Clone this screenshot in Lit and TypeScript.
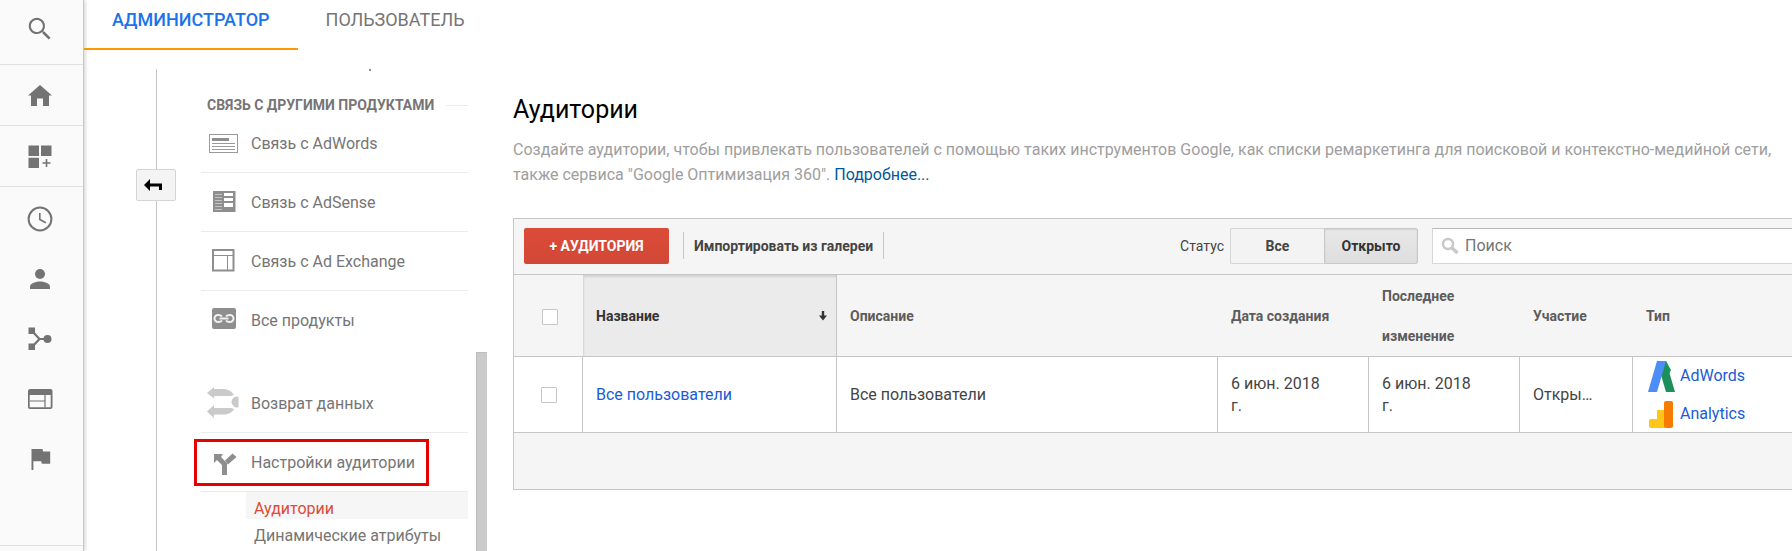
import { LitElement, html, css, svg } from "lit";
import { customElement, state } from "lit/decorators.js";
import { classMap } from "lit/directives/class-map.js";

const railIcons = {
  search: svg`<g transform="scale(1.25)"><path d="M15.5 14h-.79l-.28-.27C15.41 12.59 16 11.11 16 9.5 16 5.91 13.09 3 9.5 3S3 5.91 3 9.5 5.91 16 9.5 16c1.61 0 3.09-.59 4.23-1.57l.27.28v.79l5 4.99L20.49 19l-4.99-5zm-6 0.3C6.85 14.3 4.7 12.15 4.7 9.5S6.85 4.7 9.5 4.7 14.3 6.85 14.3 9.5 12.15 14.3 9.5 14.3z"/></g>`,
  home: svg`<path d="M6 25V14.500H3L15 4l12 10.500h-3V25h-6v-7.500h-6V25z"/>`,
  dashboard: svg`<path d="M3.500 3.500H14V14H3.500zM16 3.500h10.500V14H16zM3.500 15.700H14V26H3.500z"/><path d="M17.500 21h8M21.500 17v8" fill="none" stroke="currentColor" stroke-width="1.600"/>`,
  clock: svg`<g fill="none" stroke="currentColor"><circle cx="15" cy="15" r="11.400" stroke-width="2"/><path d="M14.800 9v6.500l6 3.300" stroke-width="1.600"/></g>`,
  person: svg`<circle cx="15" cy="10" r="5"/><path d="M5 25v-2.500c0-3.400 6.600-5 10-5s10 1.600 10 5V25z"/>`,
  flow: svg`<path d="M3.500 3.500H10V10H3.500zM3.500 19.500H10V26H3.500z"/><circle cx="22.500" cy="15" r="4"/><path d="M7 7l7.500 8L7 23M14.500 15h6" fill="none" stroke="currentColor" stroke-width="2.200"/>`,
  web: svg`<path fill-rule="evenodd" d="M5 5h20.500a2 2 0 0 1 2 2v16a2 2 0 0 1-2 2H5a2 2 0 0 1-2-2V7a2 2 0 0 1 2-2zM4.700 11v12.300h21V11z"/><path d="M20 11v12.500M4.700 17H20" fill="none" stroke="currentColor" stroke-width="1.200"/>`,
  flag: svg`<path d="M18 7.500L17.500 5H6.500v21h1.900v-8.800h7.800l.6 2.600h8.400V7.500z"/>`,
};

const navIcons = {
  adwords: svg`<rect x="3.500" y="7.500" width="28" height="18" fill="#fff" stroke="#9a9a9a"/><rect x="6" y="11" width="17" height="3" fill="#8e8e8e"/><path d="M6 16.500h23M6 19.500h23M6 22.500h23" stroke="#9a9a9a"/>`,
  adsense: svg`<rect x="7" y="5" width="22.500" height="21" fill="#8e8e8e"/><path d="M9 8.500h7M9 11.500h7M9 14.500h7M9 17.500h7M9 20.500h7M9 23.500h7" stroke="#c4c4c4"/><path d="M18 7h9v3h-9zM18 12h9v3h-9zM18 17h9v4h-9z" fill="#fff"/>`,
  exchange: svg`<rect x="7" y="5" width="20.500" height="20.500" fill="#fff" stroke="#8e8e8e" stroke-width="2"/><path d="M8 10.500h19M21.500 10.500V25" stroke="#8e8e8e"/>`,
  products: svg`<rect x="6" y="4" width="24" height="21" rx="2" fill="#8e8e8e"/><g fill="none" stroke="#f0f0f0" stroke-width="2"><path d="M16 12.500c-1-1.500-2-1.500-4-1.500a3.500 3.500 0 0 0 0 7c2 0 3 0 4-1.500M20 12.500c1-1.500 2-1.500 4-1.500a3.500 3.500 0 0 1 0 7c-2 0-3 0-4-1.500"/><path d="M13.500 14.500h9"/></g>`,
  refund: svg`<g fill="#cacaca"><path d="M1 6l7-6v2h9c5 0 9 2.500 11 6l-3 1H8v2.500zM1 24.500l7-6.500v3h17l3 1c-2 4-6 5.500-11 5.500H8V31z"/><path d="M32.500 9.700a5.500 5.500 0 1 0 0 10.600z"/></g>`,
  audience: svg`<g fill="#8e8e8e"><path d="M8 8h9l-2 3 6 6v12h-5v-10l-5-5-3 3z"/><path d="M19 14.500L26.500 7.500l4 3.500-8.500 7.500z"/></g>`,
};

type NavKey = keyof typeof navIcons;

@customElement("app-root")
export class AppRoot extends LitElement {
  @state() private status = "Открыто";

  private rail: [keyof typeof railIcons, string][] = [
    ["clock", "Отчеты в реальном времени"],
    ["person", "Аудитория"],
    ["flow", "Источники трафика"],
    ["web", "Поведение"],
    ["flag", "Конверсии"],
  ];

  private products: [NavKey, string][] = [
    ["adwords", "Связь с AdWords"],
    ["adsense", "Связь с AdSense"],
    ["exchange", "Связь с Ad Exchange"],
    ["products", "Все продукты"],
  ];

  static styles = css`
    :host {
      display: flex;
      height: 100vh;
      overflow: hidden;
      background: #fff;
      color: #757575;
      font: 16px/22px Roboto, "Noto Sans", sans-serif;
    }
    *, *::before, *::after { box-sizing: border-box; }
    a { color: inherit; text-decoration: none; }
    button { font: inherit; cursor: pointer; }
    svg { display: block; }
    ul { margin: 0; padding: 0; list-style: none; }

    .rail {
      flex: none;
      width: 84px;
      display: flex;
      flex-direction: column;
      background: #fafafa;
      border-right: 1px solid #c8c8c8;
      box-shadow: 1px 0 4px rgba(0, 0, 0, 0.2);
    }
    .rail a {
      display: flex;
      align-items: center;
      height: 60px;
      padding-left: 25px;
      color: #737373;
    }
    .rail svg { width: 30px; height: 30px; fill: currentColor; }
    .rail .boxed { height: 61px; padding-top: 2px; border-bottom: 1px solid #e0e0e0; }
    .rail .find { height: 65px; padding: 0 0 6px 25px; }
    .reports { padding: 2px 0; flex: 1; }
    .rail-foot { height: 6px; border-top: 1px solid #e0e0e0; }

    .page { flex: 1; min-width: 0; display: flex; flex-direction: column; }
    .tabs { display: flex; height: 50px; position: relative; }
    .tab {
      padding: 8px 28px 0;
      border: 0;
      border-bottom: 2px solid transparent;
      background: none;
      color: #757575;
      font-size: 18px;
      line-height: 24px;
      display: flex;
    }
    .tab.current { color: #1a73e8; font-weight: 500; border-color: #ff9800; }

    .work { flex: 1; min-height: 0; display: flex; padding-top: 19px; }
    .gutter {
      flex: none;
      width: 40px;
      margin: 0 25px 0 52px;
      display: flex;
      flex-direction: column;
      align-items: center;
    }
    .gutter i { width: 1px; background: #c6c6c6; flex: 1; }
    .gutter i:first-child { flex: 0 0 100px; }
    .collapse {
      width: 40px;
      height: 32px;
      padding: 0 0 0 7px;
      border: 1px solid #d4d4d4;
      border-radius: 2px;
      background: #f4f4f4;
    }

    .nav { flex: none; width: 267px; }
    .speck { width: 2px; height: 2px; margin-left: 168px; background: #8a8a8a; }
    .nav h2 {
      display: flex;
      align-items: center;
      gap: 12px;
      margin: 25px 0 0 6px;
      font-size: 14px;
      line-height: 18px;
      font-weight: 700;
      white-space: nowrap;
    }
    .nav h2::after { content: ""; flex: 1; height: 1px; background: #ebebeb; }
    .row {
      position: relative;
      display: flex;
      align-items: center;
      height: 59px;
      padding: 2px 0 0 5px;
      gap: 11px;
      border-bottom: 1px solid #ebebeb;
    }
    .row svg { width: 34px; height: 34px; flex: none; }
    .group .row:last-child { border-color: transparent; }
    .tools { margin-top: 24px; }
    .marked::after {
      content: "";
      position: absolute;
      left: -7px;
      top: 6px;
      width: 235px;
      height: 47px;
      border: 3px solid #e60000;
    }
    .sub { margin-left: 45px; }
    .sub a { display: block; padding: 7px 0 0 8px; line-height: 20px; }
    .sub .active { background: #f6f6f6; color: #dd4b39; }

    .scroll {
      flex: none;
      width: 11px;
      margin: 283px 26px 0 8px;
      background: #cacaca;
      border: 1px solid #bdbdbd;
      border-width: 1px 0 0 1px;
    }

    main { flex: 1; min-width: 0; padding-top: 27px; }
    h1 { margin: 0; color: #000; font-size: 25px; line-height: 28px; font-weight: 400; }
    .lead { margin: 13px 0 31px; line-height: 25px; color: #9e9e9e; }
    .lead a { color: #01579b; }

    .panel { border: 1px solid #c6c6c6; border-right: 0; background: #f5f5f5; color: #444; }
    .toolbar { display: flex; align-items: center; height: 55px; padding: 0 0 2px 10px; font-size: 14px; }
    .create {
      width: 145px;
      height: 36px;
      padding: 0;
      border: 0;
      border-radius: 2px;
      background: linear-gradient(#dd4b39, #d14836);
      color: #fff;
      font-weight: 700;
      text-shadow: 0 1px rgba(0, 0, 0, 0.1);
    }
    .import {
      height: 27px;
      margin-left: 14px;
      padding: 0 10px;
      border: solid #c6c6c6;
      border-width: 0 1px;
      background: none;
      color: #444;
      font-weight: 700;
    }
    .status { margin-left: auto; display: flex; align-items: center; gap: 6px; }
    .status button {
      width: 94px;
      height: 36px;
      padding: 0;
      border: 1px solid #d6d6d6;
      border-right: 0;
      border-radius: 2px 0 0 2px;
      background: #f3f3f3;
      color: #444;
      font-weight: 700;
    }
    .choices { display: flex; }
    .status button:last-child { border-right: 1px solid #d6d6d6; border-radius: 0 2px 2px 0; }
    .status button.on {
      border-color: #c8c8c8;
      background: linear-gradient(#e8e8e8, #dedede);
      box-shadow: inset 0 1px 2px rgba(0, 0, 0, 0.1);
      color: #333;
    }
    .search {
      width: 360px;
      height: 36px;
      margin-left: 14px;
      padding-left: 8px;
      display: flex;
      align-items: center;
      gap: 6px;
      border: 1px solid #d6d6d6;
      border-top-color: #b8b8b8;
      border-right: 0;
      background: #fff;
    }
    .search input {
      flex: 1;
      min-width: 0;
      padding: 0;
      border: 0;
      outline: 0;
      background: none;
      font: inherit;
      font-size: 16px;
    }
    .search input::placeholder { color: #757575; opacity: 1; }

    table { width: 100%; table-layout: fixed; border-collapse: separate; border-spacing: 0; }
    .c-check { width: 69px; }
    .c-name { width: 254px; }
    .c-date { width: 151px; }
    .c-member { width: 113px; }
    .c-type { width: 159px; }
    th, td { padding: 0 13px; text-align: left; vertical-align: middle; border: 0 solid #c6c6c6; }
    th {
      height: 82px;
      border-top-width: 1px;
      font-size: 14px;
      line-height: 40px;
      font-weight: 700;
      color: #5c5c5c;
    }
    th.sorted {
      background: #ebebeb;
      border-right-width: 1px;
      color: #333;
      box-shadow: inset 1px 2px 2px rgba(0, 0, 0, 0.1);
      padding-right: 9px;
    }
    .sort { display: flex; align-items: center; justify-content: space-between; }
    td {
      height: 77px;
      border-width: 1px 1px 1px 0;
      background: #fff;
      overflow: hidden;
      text-overflow: ellipsis;
      white-space: nowrap;
    }
    td:last-child { border-right: 0; }
    td.date { white-space: normal; padding-right: 36px; }
    td.member { padding-right: 36px; }
    td a { color: #1a5cd6; }
    .check { padding: 0 0 0 2px; text-align: center; line-height: 0; }
    th.check { padding-top: 3px; }
    .check input {
      appearance: none;
      width: 16px;
      height: 16px;
      margin: 0;
      border: 1px solid #c6c6c6;
      border-radius: 1px;
      background: #fff;
    }
    .types { display: flex; flex-direction: column; gap: 4px; }
    .types a { display: flex; align-items: center; gap: 4px; }
    .types svg { width: 30px; height: 34px; }
    .foot { height: 56px; }
  `;

  private railLink(icon: keyof typeof railIcons, label: string, cls = "") {
    return html`<a class=${cls} href="#" aria-label=${label}><svg viewBox="0 0 30 30">${railIcons[icon]}</svg></a>`;
  }

  private navRow(icon: NavKey, label: string, cls = "") {
    return html`<a class="row ${cls}" href="#"><svg viewBox="0 0 34 34">${navIcons[icon]}</svg>${label}</a>`;
  }

  render() {
    return html`
      <nav class="rail">
        ${this.railLink("search", "Поиск", "boxed find")}
        ${this.railLink("home", "Главная", "boxed")}
        ${this.railLink("dashboard", "Персонализация", "boxed")}
        <div class="reports">${this.rail.map(([icon, label]) => this.railLink(icon, label))}</div>
        <div class="rail-foot"></div>
      </nav>
      <div class="page">
        <div class="tabs" role="tablist">
          <button class="tab current" role="tab" aria-selected="true">АДМИНИСТРАТОР</button>
          <button class="tab" role="tab" aria-selected="false">ПОЛЬЗОВАТЕЛЬ</button>
        </div>
        <div class="work">
          <div class="gutter">
            <i></i>
            <button class="collapse" aria-label="Свернуть">
              <svg width="18" height="12" viewBox="0 0 18 12"><path d="M0 6l6-6v4.500h12V11h-3V7.500H6V12z"/></svg>
            </button>
            <i></i>
          </div>
          <nav class="nav">
            <div class="speck"></div>
            <h2>СВЯЗЬ С ДРУГИМИ ПРОДУКТАМИ</h2>
            <div class="group">${this.products.map(([icon, label]) => this.navRow(icon, label))}</div>
            <div class="tools">
              ${this.navRow("refund", "Возврат данных")}
              ${this.navRow("audience", "Настройки аудитории", "marked")}
            </div>
            <ul class="sub">
              <li><a class="active" href="#">Аудитории</a></li>
              <li><a href="#">Динамические атрибуты</a></li>
            </ul>
          </nav>
          <div class="scroll"></div>
          <main>
            <h1>Аудитории</h1>
            <p class="lead">
              Создайте аудитории, чтобы привлекать пользователей с помощью таких инструментов Google, как списки
              ремаркетинга для поисковой и контекстно-медийной сети, также сервиса "Google Оптимизация 360".
              <a href="#">Подробнее...</a>
            </p>
            <section class="panel">
              <div class="toolbar">
                <button class="create">+ АУДИТОРИЯ</button>
                <button class="import">Импортировать из галереи</button>
                <div class="status">
                  <span id="status-label">Статус</span>
                  <div class="choices" role="group" aria-labelledby="status-label">
                    ${["Все", "Открыто"].map(
                      (s) => html`<button
                        class=${classMap({ on: this.status === s })}
                        aria-pressed=${this.status === s}
                        @click=${() => (this.status = s)}
                      >${s}</button>`
                    )}
                  </div>
                </div>
                <label class="search">
                  <svg width="18" height="18" viewBox="0 0 18 18" fill="none" stroke="#c8c8c8">
                    <circle cx="7" cy="7" r="5" stroke-width="2.500" /><path d="M11 11l5.500 5" stroke-width="3.500" />
                  </svg>
                  <input type="text" placeholder="Поиск" aria-label="Поиск" />
                </label>
              </div>
              <table>
                <colgroup>
                  <col class="c-check" /><col class="c-name" /><col /><col class="c-date" /><col class="c-date" />
                  <col class="c-member" /><col class="c-type" />
                </colgroup>
                <thead>
                  <tr>
                    <th class="check"><input type="checkbox" aria-label="Выбрать все" /></th>
                    <th class="sorted">
                      <div class="sort">
                        Название
                        <svg width="8" height="10" viewBox="0 0 8 10"><path d="M2.800 0h2.400v4.500H8L4 9.500 0 4.500h2.800z" fill="#333"/></svg>
                      </div>
                    </th>
                    <th>Описание</th>
                    <th>Дата создания</th>
                    <th>Последнее изменение</th>
                    <th>Участие</th>
                    <th>Тип</th>
                  </tr>
                </thead>
                <tbody>
                  <tr>
                    <td class="check"><input type="checkbox" aria-label="Все пользователи" /></td>
                    <td><a href="#">Все пользователи</a></td>
                    <td>Все пользователи</td>
                    <td class="date">6 июн. 2018 г.</td>
                    <td class="date">6 июн. 2018 г.</td>
                    <td class="member">Открыто</td>
                    <td>
                      <div class="types">
                        <a href="#">
                          <svg viewBox="0 0 30 34"><path d="M12 2h8l5 9-5 10z" fill="#0f9d58"/><path d="M20 2l9 31h-9l-5-17z" fill="#1e8e5a"/><path d="M11 2h9L11 33H2z" fill="#4d8df6"/></svg>
                          AdWords
                        </a>
                        <a href="#">
                          <svg viewBox="0 0 30 34"><path d="M4 22h7v-8a1 1 0 0 1 1-1h7v18H5a2 2 0 0 1-2-2v-6z" fill="#ffc517"/><rect x="18" y="4" width="9" height="27" rx="2" fill="#f57c00"/></svg>
                          Analytics
                        </a>
                      </div>
                    </td>
                  </tr>
                </tbody>
              </table>
              <div class="foot"></div>
            </section>
          </main>
        </div>
      </div>
    `;
  }
}
